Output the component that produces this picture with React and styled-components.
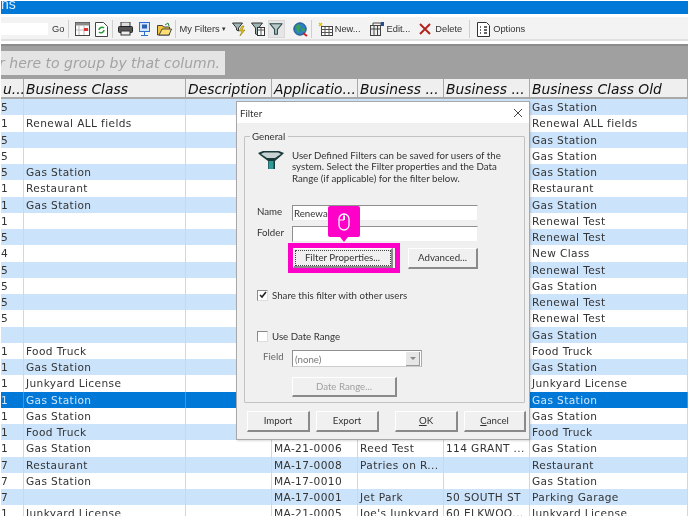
import React from 'react';
import styled, { createGlobalStyle } from 'styled-components';

const Global = createGlobalStyle`
  html, body { margin: 0; padding: 0; background: #fff; }
  #root { width: 688px; height: 516px; overflow: hidden; }
`;
const Page = styled.div`
  position: relative; width: 688px; height: 516px; overflow: hidden; background: #fff;
  display: flex; flex-direction: column; padding: 1px 0 0 1px; box-sizing: border-box;
  font-family: "DejaVu Sans", sans-serif; filter: blur(0.35px);
`;
const TitleBar = styled.div`
  height: 13px; background: #0078d7; color: #d8ecfb; font: 14px/11px "Liberation Sans", sans-serif; overflow: hidden; flex: none;
  span { display: block; margin-top: -2px; }
`;
const Toolbar = styled.div`
  flex: none; height: 24px; margin-top: 3px; padding-top: 2px; background: #f3f3f3; display: flex; align-items: center; box-sizing: border-box;
  font: 9.3px "Liberation Sans", sans-serif; color: #333; border-bottom: 2px solid #e0e0e0;
`;
const SearchBox = styled.div` width: 47px; height: 12px; background: #fff; flex: none; `;
const ToolText = styled.span` white-space: nowrap; margin-left: ${p => p.$ml || 0}px; `;
const Caret = styled.span` margin-left: 2px; font-size: 7px; `;
const Sep = styled.div` width: 1px; height: 18px; background: #cfcfcf; flex: none; margin: 0 ${p => p.$r}px 0 ${p => p.$l}px; `;
const Icon = styled.svg` flex: none; margin-left: ${p => p.$ml || 0}px; display: block; `;
const Pressed = styled.div`
  flex: none; width: 17px; height: 18px; margin-left: 3px; background: #e6e6e6; border: 1px solid #d8d8d8; box-sizing: border-box;
  display: flex; align-items: center; justify-content: center;
`;
const Gap = styled.div` height: 3px; background: #fff; flex: none; `;
const GroupArea = styled.div`
  flex: none; height: 35px; background: #a0a0a0; border-top: 2px solid #8c8c8c; box-sizing: border-box; padding-top: 5px;
`;
const GroupHint = styled.div`
  width: 224px; height: 24px; background: #e4e4e4; color: #a3a3a3; font: italic 14px/24px "DejaVu Sans", sans-serif; white-space: nowrap; overflow: hidden;
  box-sizing: border-box; display: flex; justify-content: flex-end; padding-right: 5px;
`;
const cols = '23px 162px 86px 86px 86px 86px 1fr';
const Head = styled.div`
  flex: none; display: grid; grid-template-columns: ${cols}; height: 20px; background: #a0a0a0;
`;
const HeadCell = styled.div`
  background: #efefef; border-right: 1px solid #a9a9a9; border-bottom: 2px solid #a9a9a9; box-sizing: border-box; padding-left: 2px; color: #111;
  font: italic 13.85px/21px "DejaVu Sans", sans-serif; white-space: nowrap; overflow: hidden;
`;
const Body = styled.div` flex: none; display: flex; flex-direction: column; `;
const Row = styled.div`
  display: grid; grid-template-columns: ${cols}; height: 16.25px; box-sizing: border-box; flex: none;
  background: ${p => p.$sel ? '#0078d7' : p.$odd ? '#fff' : '#cce4fb'};
  color: ${p => p.$sel ? '#cfe6fa' : '#333'};
  font: 10.6px/15px "DejaVu Sans", sans-serif; letter-spacing: 0.38px;
`;
const Cell = styled.div`
  border-right: 1px solid ${p => p.$sel ? '#3d97e0' : '#c3dbf1'}; padding: 1px 0 0 2px; white-space: nowrap; overflow: hidden; box-sizing: border-box;
`;
const NumCell = styled(Cell)` text-align: right; padding: 1px 17px 0 0; `;

const Dialog = styled.div`
  position: absolute; left: 236px; top: 101px; width: 294px; height: 339px; background: #f0f0f0; border: 1px solid #a8a8a8; box-sizing: border-box;
  box-shadow: 1px 1px 2px rgba(0,0,0,.15); display: flex; flex-direction: column;
  font: 9.7px/12px Lato, sans-serif; color: #333;
`;
const DlgTitle = styled.div`
  flex: none; height: 21px; background: #fff; display: flex; align-items: center; justify-content: space-between; padding: 0 6px 0 3px;
`;
const Fieldset = styled.div`
  position: relative; flex: none; margin: 13px 4px 0 7px; height: 267px; border: 1px solid #c2c2c2; border-radius: 1px; box-sizing: border-box;
  padding: 0 0 0 13px; display: flex; flex-direction: column;
`;
const Legend = styled.span`
  position: absolute; left: 5px; top: -7px; background: #f0f0f0; padding: 0 3px 0 2px; line-height: 13px;
`;
const Intro = styled.div` display: flex; margin-top: 13px; `;
const IntroText = styled.div` margin-left: 8px; width: 212px; line-height: 11.4px; white-space: nowrap; `;
const FieldRow = styled.div`
  display: flex; align-items: center; margin-top: ${p => p.$mt}px;
`;
const Label = styled.span`
  width: 35px; margin-left: -1px; flex: none; align-self: flex-start; color: ${p => p.$dim ? '#666' : '#333'}; padding-left: ${p => p.$pl || 0}px; box-sizing: border-box;
`;
const Input = styled.div`
  width: 186px; height: 16px; box-sizing: border-box; background: #fff; border: 1px solid #eee; border-top: 1px solid #8f8f8f; border-left: 1px solid #8f8f8f;
  padding-left: 1px; line-height: 14px; overflow: hidden;
`;
const Buttons = styled.div` display: flex; align-items: center; margin: 1px 0 0 30px; `;
const Highlight = styled.div`
  position: relative; width: 112px; height: 30px; border: 5px solid #ff00c8; box-sizing: border-box; background: #f0f0f0; flex: none;
  display: flex;
`;
const Btn = styled.button`
  flex: none; width: ${p => p.$w}px; height: ${p => p.$h || 21}px; margin-left: ${p => p.$ml || 0}px; margin-top: ${p => p.$mt || 0}px; padding: 0 0 2px; box-sizing: border-box;
  background: #f0f0f0; border: 1px solid #fff; border-right: 2px solid #8a8a8a; border-bottom: 2px solid #8a8a8a;
  font: 9.7px Lato, sans-serif; color: ${p => p.disabled ? '#a0a0a0' : '#333'};
  outline: ${p => p.$focus ? '1px dotted #444' : 'none'}; outline-offset: -3px;
  u { text-decoration: underline; }
`;
const Tip = styled.div`
  position: absolute; left: 35px; top: -42px; width: 32px; height: 31px; background: #ff00c8; border-radius: 2px; display: flex; align-items: center; justify-content: center;
  &:after { content: ''; position: absolute; left: 12px; bottom: -5px; border: 4px solid transparent; border-bottom: 0; border-top: 5px solid #ff00c8; }
`;
const CheckRow = styled.label`
  display: flex; align-items: center; gap: 4px; margin-top: ${p => p.$mt}px; margin-left: -1px;
`;
const Box = styled.span`
  width: 9px; height: 9px; background: #fff; border: 1px solid #8a8a8a; border-right-color: #ddd; border-bottom-color: #ddd; flex: none; display: flex; align-items: center; justify-content: center;
`;
const Select = styled.div`
  width: 130px; height: 17px; box-sizing: border-box; background: #fff; border: 1px solid #8f8f8f; border-right-color: #aaa; border-bottom-color: #ccc; display: flex; align-items: center; justify-content: space-between; padding-left: 2px; color: #777;
`;
const Arrow = styled.span`
  width: 13px; height: 13px; margin-right: 1px; background: #e6e6e6; border-right: 1px solid #999; border-bottom: 1px solid #999; display: flex; align-items: center; justify-content: center;
  &:after { content: ''; border: 3px solid transparent; border-bottom: 0; border-top: 3px solid #888; }
`;
const Footer = styled.div` flex: none; display: flex; margin: 8px 0 0 10px; `;

const rowsData = [
  ['5','','Gas Station'],['1','Renewal ALL fields','Renewal ALL fields'],['5','','Gas Station'],['5','','Gas Station'],
  ['5','Gas Station','Gas Station'],['1','Restaurant','Restaurant'],['1','Gas Station','Gas Station'],['1','','Renewal Test'],
  ['5','','Renewal Test'],['4','','New Class'],['5','','Renewal Test'],['5','','Gas Station'],['5','','Renewal Test'],['5','','Renewal Test'],
  ['','','Gas Station'],['1','Food Truck','Food Truck'],['1','Gas Station','Gas Station'],['1','Junkyard License','Junkyard License'],
  ['1','Gas Station','Gas Station'],['1','Gas Station','Gas Station'],['1','Food Truck','Food Truck'],
  ['1','Gas Station','Gas Station','MA-21-0006','Reed Test','114 GRANT ...'],
  ['7','Restaurant','Restaurant','MA-17-0008','Patries on R...',''],
  ['7','Gas Station','Gas Station','MA-17-0010','',''],
  ['7','','Parking Garage','MA-17-0001','Jet Park','50 SOUTH ST'],
  ['1','Junkyard License','Junkyard License','MA-21-0005',"Joe's Junkyard",'60 ELKWOO...'],
];

export default function App() {
  return (
    <Page>
      <Global />
      <TitleBar><span>ns</span></TitleBar>
      <Toolbar>
        <SearchBox />
        <ToolText $ml={4}>Go</ToolText>
        <Sep $l={4} $r={6} />
        <Icon width="15" height="14" viewBox="0 0 15 14"><rect x=".5" y=".5" width="14" height="13" fill="#fff" stroke="#444" /><rect x=".5" y=".5" width="14" height="3" fill="#8a8a8a" /><path d="M4 4v9M9 4v9M1 8h13" stroke="#bbb" /><rect x="9" y="6" width="4" height="3" fill="#d33" /></Icon>
        <Icon $ml={5} width="13" height="15" viewBox="0 0 13 15"><path d="M.5.5h8l4 4v10H.5z" fill="#fff" stroke="#444" /><path d="M4 8a3 3 0 0 1 5-2M9 8a3 3 0 0 1-5 2" fill="none" stroke="#2a9a3a" strokeWidth="1.6" /></Icon>
        <Sep $l={4} $r={5} />
        <Icon width="15" height="14" viewBox="0 0 15 14"><rect x="3" y="0" width="9" height="5" fill="#ddd" stroke="#333" /><rect x=".5" y="4.5" width="14" height="6" rx="1" fill="#555" stroke="#222" /><rect x="3" y="9" width="9" height="4" fill="#eee" stroke="#333" /></Icon>
        <Icon $ml={6} width="11" height="14" viewBox="0 0 11 14"><rect x=".5" y=".5" width="10" height="9" fill="#d5e5fb" stroke="#2b6fd1" /><rect x="3" y="2.500" width="5" height="4" fill="#2b5fb0" /><path d="M5.500 10v3M2 13.500h7" stroke="#2b6fd1" /></Icon>
        <Icon $ml={7} width="15" height="14" viewBox="0 0 15 14"><path d="M.5 3.500h5l1 1.500h6v8H.5z" fill="#f3c63c" stroke="#444" /><path d="M2 13l3-6h9.500l-2.500 6z" fill="#ffdf74" stroke="#444" /><path d="M8 3l3-2 1 3" fill="none" stroke="#2a8a3a" /></Icon>
        <Sep $l={3} $r={3} />
        <ToolText>My Filters</ToolText>
        <Caret>▾</Caret>
        <Icon $ml={6} width="14" height="15" viewBox="0 0 14 15"><path d="M.5 1h10L6.500 6v3L4.500 8V6z" fill="#9fb5b5" stroke="#333" /><path d="M10 4 7 9h3l-2 5 5-6h-3l2-4z" fill="#e8c820" stroke="#8a7a10" strokeWidth=".6" /></Icon>
        <Icon $ml={5} width="14" height="15" viewBox="0 0 14 15"><path d="M.5 1h11L7.500 6v7L4.500 12V6z" fill="#9fb5b5" stroke="#333" /><rect x="6.500" y="5.500" width="7" height="8" fill="#fff" stroke="#333" /><path d="M7 8h6M10 6v7" stroke="#555" /></Icon>
        <Pressed>
          <Icon width="14" height="14" viewBox="0 0 16 16"><path d="M1 2h14L9.600 8.500V14H6.400V8.500z" fill="#b9c9c9" stroke="#2d4a4a" strokeWidth="1.300" strokeLinejoin="round" /></Icon>
        </Pressed>
        <Icon $ml={8} width="15" height="15" viewBox="0 0 15 15"><circle cx="7" cy="7" r="6.200" fill="#2a7fc8" stroke="#1d4f80" /><path d="M3 4l3-2 2 3-2 3 1 3-3-1zM9 6l3 1-1 3-2-1z" fill="#3aa24a" /><path d="M10 11l4 3" stroke="#c22" strokeWidth="2" /></Icon>
        <Sep $l={3} $r={6} />
        <Icon width="15" height="14" viewBox="0 0 15 14"><path d="M1 1l3 3M4 1L1 4" stroke="#e6c000" strokeWidth="1.400" /><rect x="3.500" y="4.500" width="11" height="9" fill="#fff" stroke="#444" /><path d="M3.500 7.500h11M7 5v8M11 5v8M4 10.500h10" stroke="#555" /></Icon>
        <ToolText $ml={2}>New...</ToolText>
        <Icon $ml={9} width="15" height="14" viewBox="0 0 15 14"><rect x=".5" y="3.500" width="10" height="10" fill="#eee" stroke="#444" /><path d="M.5 7h10M4 4v9M7.500 4v9" stroke="#444" /><path d="M3 3V1h8v3" fill="none" stroke="#444" /><rect x="11" y="0" width="3" height="4" fill="#1d4fa0" /></Icon>
        <ToolText $ml={2}>Edit...</ToolText>
        <Icon $ml={9} width="12" height="12" viewBox="0 0 12 12"><path d="M1 1l10 10M11 1L1 11" stroke="#b3261e" strokeWidth="2" /></Icon>
        <ToolText $ml={4}>Delete</ToolText>
        <Sep $l={7} $r={7} />
        <Icon width="13" height="15" viewBox="0 0 13 15"><path d="M.5.5h9l3 3v11H.5z" fill="#fff" stroke="#333" /><path d="M3 5h1M3 8h1M3 11h1M7 5h3M7 8h3M7 11h3" stroke="#333" strokeWidth="1.300" /></Icon>
        <ToolText $ml={3}>Options</ToolText>
      </Toolbar>
      <Gap />
      <GroupArea><GroupHint>r here to group by that column.</GroupHint></GroupArea>
      <Head>
        {['u...','Business Class','Description','Applicatio...','Business ...','Business ...','Business Class Old'].map((h, i) => <HeadCell key={i}>{h}</HeadCell>)}
      </Head>
      <Body>
        {rowsData.map((r, i) => {
          const sel = i === 18;
          return (
            <Row key={i} $odd={i % 2 === 1} $sel={sel}>
              <NumCell $sel={sel}>{r[0]}</NumCell>
              <Cell $sel={sel}>{r[1]}</Cell>
              <Cell $sel={sel} />
              <Cell $sel={sel}>{r[3]}</Cell>
              <Cell $sel={sel}>{r[4]}</Cell>
              <Cell $sel={sel}>{r[5]}</Cell>
              <Cell $sel={sel}>{r[2]}</Cell>
            </Row>
          );
        })}
      </Body>
      <Dialog>
        <DlgTitle>
          <span>Filter</span>
          <Icon width="10" height="10" viewBox="0 0 10 10"><path d="M1 1l8 8M9 1L1 9" stroke="#444" strokeWidth="1" /></Icon>
        </DlgTitle>
        <Fieldset>
          <Legend>General</Legend>
          <Intro>
            <Icon width="26" height="20" viewBox="0 0 26 20">
              <path d="M0 3 5 1h16l5 2-2 2-7 6v8H10v-8L2 5z" fill="#1a3a3a" />
              <path d="M3 4l3-1.500h14L23 4l-6 4H9z" fill="#c8d2d2" />
              <rect x="10.500" y="11" width="5" height="8" fill="#2e9a9a" />
            </Icon>
            <IntroText>User Defined Filters can be saved for users of the<br />system. Select the Filter properties and the Data<br />Range (if applicable) for the filter below.</IntroText>
          </Intro>
          <FieldRow $mt={21}><Label>Name</Label><Input>Renewal</Input></FieldRow>
          <FieldRow $mt={5}><Label>Folder</Label><Input /></FieldRow>
          <Buttons>
            <Highlight>
              <Btn $w={100} $h={20} $focus>Filter Properties...</Btn>
              <Tip>
                <Icon width="12" height="18" viewBox="0 0 12 18"><rect x="1" y="1" width="10" height="16" rx="5" fill="none" stroke="#fff" strokeWidth="1.300" /><path d="M6 1v6M1.500 7H6" stroke="#fff" /><rect x="5" y="3" width="2" height="4" fill="#fff" /></Icon>
              </Tip>
            </Highlight>
            <Btn $w={70} $ml={8}>Advanced...</Btn>
          </Buttons>
          <CheckRow $mt={16}>
            <Box><Icon width="8" height="8" viewBox="0 0 8 8"><path d="M1 4l2 2 4-5" fill="none" stroke="#222" strokeWidth="1.600" /></Icon></Box>
            <span>Share this filter with other users</span>
          </CheckRow>
          <CheckRow $mt={29}><Box /><span>Use Date Range</span></CheckRow>
          <FieldRow $mt={8}><Label $dim $pl={6}>Field</Label><Select>(none)<Arrow /></Select></FieldRow>
          <Btn disabled $w={105} $h={20} $ml={34} $mt={10}>Date Range...</Btn>
        </Fieldset>
        <Footer>
          <Btn $w={63}>Import</Btn>
          <Btn $w={63} $ml={6}>Export</Btn>
          <Btn $w={63} $ml={16}><u>O</u>K</Btn>
          <Btn $w={62} $ml={6}><u>C</u>ancel</Btn>
        </Footer>
      </Dialog>
    </Page>
  );
}
